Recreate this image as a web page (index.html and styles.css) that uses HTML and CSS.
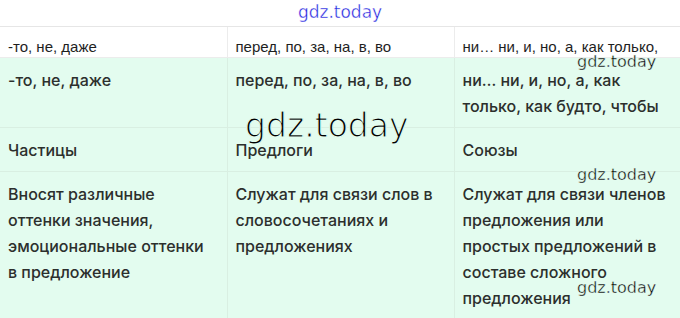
FILE: index.html
```html
<!DOCTYPE html>
<html lang="ru">
<head>
<meta charset="utf-8">
<link rel="stylesheet" href="styles.css">
</head>
<body>
<div class="page">
  <div class="top"><span class="toplogo">gdz.today</span></div>
  <table class="grid">
    <colgroup><col class="c1"><col class="c2"><col class="c3"></colgroup>
    <tr class="head">
      <td>-то, не, даже</td>
      <td>перед, по, за, на, в, во</td>
      <td>ни… ни, и, но, а, как только,</td>
    </tr>
    <tr class="g">
      <td>-то, не, даже</td>
      <td>перед, по, за, на, в, во</td>
      <td>ни… ни, и, но, а, как<br>только, как будто, чтобы</td>
    </tr>
    <tr class="g">
      <td>Частицы</td>
      <td>Предлоги</td>
      <td>Союзы</td>
    </tr>
    <tr class="g">
      <td>Вносят различные<br>оттенки значения,<br>эмоциональные оттенки<br>в предложение</td>
      <td>Служат для связи слов в<br>словосочетаниях и<br>предложениях</td>
      <td>Служат для связи членов<br>предложения или<br>простых предложений в<br>составе сложного<br>предложения</td>
    </tr>
  </table>
  <span class="wm big">gdz.today</span>
  <span class="wm small s1">gdz.today</span>
  <span class="wm small s2">gdz.today</span>
  <span class="wm small s3">gdz.today</span>
</div>
</body>
</html>
```
FILE: styles.css
```css
html, body {
  margin: 0;
  padding: 0;
  background: #ffffff;
}
.page {
  position: relative;
  width: 680px;
  height: 318px;
  overflow: hidden;
}
.top {
  height: 26px;
  border-bottom: 1px solid #e6e6e6;
  text-align: center;
  line-height: 25px;
}
.toplogo {
  font-family: "DejaVu Sans", sans-serif;
  font-size: 17px;
  color: #2020e0;
  -webkit-text-stroke: 0.4px #ffffff;
}
.grid {
  width: 680px;
  border-collapse: collapse;
  table-layout: fixed;
}
.c1 { width: 227px; }
.c2 { width: 227px; }
.c3 { width: 226px; }
.grid td {
  vertical-align: top;
  padding: 9px 8px 8px 8px;
  border: 1px solid #d9efe2;
  white-space: nowrap;
}
.grid tr td:first-child { border-left: none; }
.grid tr td:last-child { border-right: none; }
.head td {
  background: #ffffff;
  border-color: #ececec;
  border-top: none;
  font-family: "Liberation Sans", Arial, sans-serif;
  font-size: 15px;
  line-height: 20px;
  padding: 10px 8px 0 8px;
  height: 20px;
  color: #1e1e1e;
}
.g td {
  background: #e3fcef;
  font-family: "Inter", sans-serif;
  font-weight: 500;
  font-size: 16px;
  line-height: 26px;
  color: #2c2f2d;
}
.wm {
  position: absolute;
  color: #000000;
  white-space: nowrap;
  line-height: 1;
  font-family: "DejaVu Sans", sans-serif;
}
.big {
  left: 245px;
  top: 109px;
  font-size: 33px;
  -webkit-text-stroke: 1.2px #e3fcef;
}
.small {
  font-size: 16px;
  -webkit-text-stroke: 0.4px #e3fcef;
}
.s1 { left: 577px; top: 54px; }
.s2 { left: 577px; top: 167px; }
.s3 { left: 577px; top: 280px; }
```
